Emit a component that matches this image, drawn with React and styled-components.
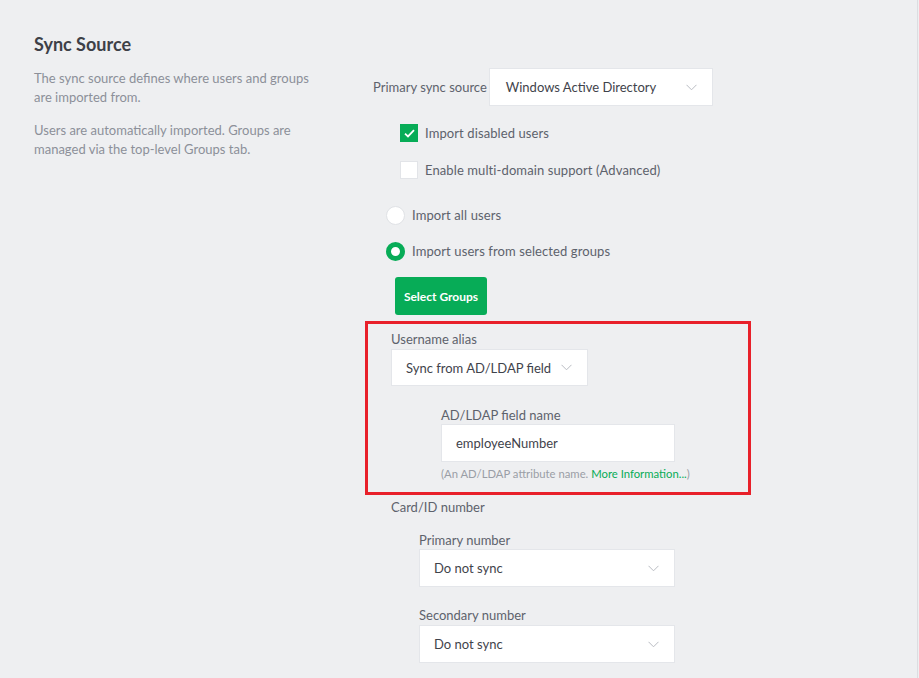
import React from "react";
import styled, { createGlobalStyle } from "styled-components";

const GREEN = "#07ac57";

const Global = createGlobalStyle`
  html, body { margin: 0; padding: 0; background: #eeeff1; }
  body { font-family: "Source Sans Pro", Lato, "Noto Sans", sans-serif; }
  * { box-sizing: border-box; }
`;

const Page = styled.div`
  width: 918px;
  min-height: 678px;
  border-right: 1px solid #dcdde1;
  padding: 33px 0 0 34px;
`;

const Title = styled.h2`
  margin: 0 0 13px;
  font-size: 18px;
  line-height: 22px;
  font-weight: 700;
  color: #3d4047;
`;

const Columns = styled.div`
  display: grid;
  grid-template-columns: 339px 1fr;
`;

const Desc = styled.div`
  width: 290px;
  padding-top: 1px;
`;

const Para = styled.p`
  margin: 0 0 14px;
  font-size: 13px;
  line-height: 19px;
  color: #8c9099;
`;

const Form = styled.div`
  display: flex;
  flex-direction: column;
  align-items: flex-start;
`;

const InlineRow = styled.div`
  display: flex;
  align-items: center;
  gap: 2px;
`;

const Label = styled.div`
  font-size: 13px;
  line-height: 18px;
  color: #5d626c;
  margin: ${(p) => p.$m || "0"};
  margin-left: ${(p) => p.$indent || 0}px;
`;

const SelectBox = styled.div`
  width: ${(p) => p.$w}px;
  height: ${(p) => p.$h || 38}px;
  background: #fff;
  border: 1px solid #e4e6ea;
  display: flex;
  align-items: center;
  justify-content: space-between;
  padding: 0 15px 0 ${(p) => p.$pl || 14}px;
  font-size: 13px;
  color: #3f434b;
  margin-left: ${(p) => p.$indent || 0}px;
`;

const Chevron = () => (
  <svg width="11" height="7" viewBox="0 0 11 7">
    <polyline points="0.5,0.8 5.5,5.8 10.5,0.8" fill="none" stroke="#b9bcc2" strokeWidth="1" />
  </svg>
);

const Select = ({ w, h, indent, pl, children }) => (
  <SelectBox $w={w} $h={h} $indent={indent} $pl={pl}>
    <span>{children}</span>
    <Chevron />
  </SelectBox>
);

const OptionRow = styled.div`
  display: flex;
  align-items: center;
  gap: 7px;
  height: 18px;
  margin-left: ${(p) => p.$indent}px;
  margin-top: ${(p) => p.$mt}px;
  font-size: 13px;
  letter-spacing: 0.1px;
  color: #5d626c;
`;

const Box = styled.span`
  width: 18px;
  height: 18px;
  flex: none;
  display: inline-flex;
  align-items: center;
  justify-content: center;
  background: ${(p) => (p.$on ? GREEN : "#fff")};
  border: 1px solid ${(p) => (p.$on ? GREEN : "#e2e4e8")};
`;

const Radio = styled.span`
  width: 19px;
  height: 19px;
  flex: none;
  border-radius: 50%;
  background: #fff;
  border: ${(p) => (p.$on ? `5px solid ${GREEN}` : "1px solid #e0e2e6")};
`;

const Button = styled.button`
  margin: 17px 0 0 22px;
  width: 92px;
  height: 38px;
  border: none;
  border-radius: 3px;
  background: ${GREEN};
  color: #fff;
  font-family: inherit;
  font-size: 12px;
  font-weight: 700;
  padding: 0;
`;

const Highlight = styled.div`
  margin: 6px 0 0 -8px;
  width: 386px;
  border: 3px solid #e8202a;
  padding: 6px 0 10px 23px;
  display: flex;
  flex-direction: column;
  align-items: flex-start;
`;

const Input = styled.div`
  width: ${(p) => p.$w}px;
  height: 38px;
  background: #fff;
  border: 1px solid #e4e6ea;
  display: flex;
  align-items: center;
  padding-left: 14px;
  font-size: 13px;
  color: #3f434b;
  margin-left: ${(p) => p.$indent || 0}px;
`;

const Help = styled.div`
  margin: 4px 0 0 ${(p) => p.$indent}px;
  font-size: 11.3px;
  line-height: 16px;
  color: #9a9ea6;
`;

const Link = styled.span`
  color: ${GREEN};
`;

const Check = () => (
  <svg width="11" height="9" viewBox="0 0 11 9">
    <polyline points="1,4.6 4,7.4 10,1.2" fill="none" stroke="#fff" strokeWidth="1.8" />
  </svg>
);

export default function App() {
  return (
    <>
      <Global />
      <Page>
        <Title>Sync Source</Title>
        <Columns>
          <Desc>
            <Para>The sync source defines where users and groups are imported from.</Para>
            <Para>Users are automatically imported. Groups are managed via the top-level Groups tab.</Para>
          </Desc>
          <Form>
            <InlineRow>
              <Label>Primary sync source</Label>
              <Select w={224} pl={16}>Windows Active Directory</Select>
            </InlineRow>
            <OptionRow $indent={27} $mt={18}>
              <Box $on><Check /></Box>
              Import disabled users
            </OptionRow>
            <OptionRow $indent={27} $mt={19}>
              <Box />
              Enable multi-domain support (Advanced)
            </OptionRow>
            <OptionRow $indent={13} $mt={27}>
              <Radio />
              Import all users
            </OptionRow>
            <OptionRow $indent={13} $mt={18}>
              <Radio $on />
              Import users from selected groups
            </OptionRow>
            <Button>Select Groups</Button>
            <Highlight>
              <Label $m="0 0 1px">Username alias</Label>
              <Select w={197} h={37}>Sync from AD/LDAP field</Select>
              <Label $m="20px 0 0" $indent={50}>AD/LDAP field name</Label>
              <Input $w={234} $indent={50}>employeeNumber</Input>
              <Help $indent={50}>
                (An AD/LDAP attribute name. <Link>More Information...</Link>)
              </Help>
            </Highlight>
            <Label $m="3px 0 0" $indent={18}>Card/ID number</Label>
            <Label $m="15px 0 0" $indent={46}>Primary number</Label>
            <Select w={256} indent={46}>Do not sync</Select>
            <Label $m="19px 0 1px" $indent={46}>Secondary number</Label>
            <Select w={256} indent={46}>Do not sync</Select>
          </Form>
        </Columns>
      </Page>
    </>
  );
}
